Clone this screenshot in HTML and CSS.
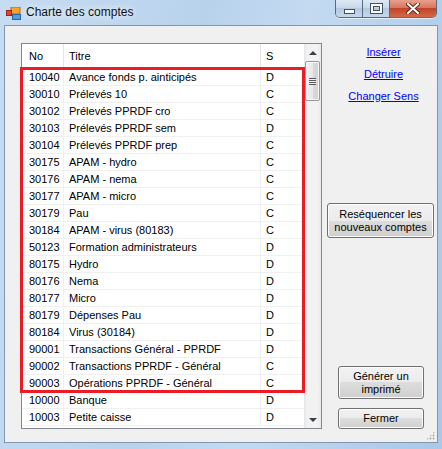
FILE: index.html
```html
<!DOCTYPE html>
<html>
<head>
<meta charset="utf-8">
<link rel="stylesheet" href="styles.css">
</head>
<body>
<div class="window">
  <div class="titlebar">
    <svg class="appicon" width="15" height="13" viewBox="0 0 15 13">
      <rect x="5" y="0" width="9" height="7" fill="#f4a52c" stroke="#b8680e" stroke-width="1"/>
      <rect x="0.5" y="3.5" width="5" height="5" fill="#e2452a" stroke="#9c2412" stroke-width="1"/>
      <rect x="6.5" y="7.5" width="8" height="5" fill="#4f9be6" stroke="#2a62a8" stroke-width="1"/>
    </svg>
    <span class="title">Charte des comptes</span>
    <div class="caption">
      <div class="cb cb-min"><span class="g-min"></span></div>
      <div class="cb cb-max"><span class="g-max"></span></div>
      <div class="cb cb-close">
        <svg width="14" height="11" viewBox="0 0 14 11"><path d="M2 1 L12 10 M12 1 L2 10" stroke="#5a2b22" stroke-width="4" stroke-linecap="square"/><path d="M2 1 L12 10 M12 1 L2 10" stroke="#ffffff" stroke-width="2" stroke-linecap="square"/></svg>
      </div>
    </div>
  </div>
  <div class="client">
    <div class="grid">
      <div class="table">
        <div class="row header"><div class="c no">No</div><div class="c ti">Titre</div><div class="c s">S</div></div>
        <div class="row"><div class="c no">10040</div><div class="c ti">Avance fonds p. ainticipés</div><div class="c s">D</div></div>
        <div class="row"><div class="c no">30010</div><div class="c ti">Prélevés 10</div><div class="c s">C</div></div>
        <div class="row"><div class="c no">30102</div><div class="c ti">Prélevés PPRDF cro</div><div class="c s">C</div></div>
        <div class="row"><div class="c no">30103</div><div class="c ti">Prélevés PPRDF sem</div><div class="c s">D</div></div>
        <div class="row"><div class="c no">30104</div><div class="c ti">Prélevés PPRDF prep</div><div class="c s">C</div></div>
        <div class="row"><div class="c no">30175</div><div class="c ti">APAM - hydro</div><div class="c s">C</div></div>
        <div class="row"><div class="c no">30176</div><div class="c ti">APAM - nema</div><div class="c s">C</div></div>
        <div class="row"><div class="c no">30177</div><div class="c ti">APAM - micro</div><div class="c s">C</div></div>
        <div class="row"><div class="c no">30179</div><div class="c ti">Pau</div><div class="c s">C</div></div>
        <div class="row"><div class="c no">30184</div><div class="c ti">APAM - virus (80183)</div><div class="c s">C</div></div>
        <div class="row"><div class="c no">50123</div><div class="c ti">Formation administrateurs</div><div class="c s">D</div></div>
        <div class="row"><div class="c no">80175</div><div class="c ti">Hydro</div><div class="c s">D</div></div>
        <div class="row"><div class="c no">80176</div><div class="c ti">Nema</div><div class="c s">D</div></div>
        <div class="row"><div class="c no">80177</div><div class="c ti">Micro</div><div class="c s">D</div></div>
        <div class="row"><div class="c no">80179</div><div class="c ti">Dépenses Pau</div><div class="c s">D</div></div>
        <div class="row"><div class="c no">80184</div><div class="c ti">Virus (30184)</div><div class="c s">D</div></div>
        <div class="row"><div class="c no">90001</div><div class="c ti">Transactions Général - PPRDF</div><div class="c s">D</div></div>
        <div class="row"><div class="c no">90002</div><div class="c ti">Transactions PPRDF - Général</div><div class="c s">C</div></div>
        <div class="row"><div class="c no">90003</div><div class="c ti">Opérations PPRDF - Général</div><div class="c s">C</div></div>
        <div class="row"><div class="c no">10000</div><div class="c ti">Banque</div><div class="c s">D</div></div>
        <div class="row"><div class="c no">10003</div><div class="c ti">Petite caisse</div><div class="c s">D</div></div>
      </div>
      <div class="scrollbar">
        <div class="sb-btn"><span class="tri-up"></span></div>
        <div class="thumb"><span class="grip-lines"></span></div>
        <div class="sb-track"></div>
        <div class="sb-btn"><span class="tri-down"></span></div>
      </div>
      <div class="highlight"></div>
    </div>
    <div class="side">
      <div class="links">
        <a class="link">Insérer</a>
        <a class="link">Détruire</a>
        <a class="link">Changer Sens</a>
      </div>
      <button class="btn btn-reseq">Reséquencer les<br>nouveaux comptes</button>
      <button class="btn btn-gen">Générer un<br>imprimé</button>
      <button class="btn btn-close">Fermer</button>
    </div>
    <div class="sizegrip"></div>
  </div>
</div>
</body>
</html>
```

FILE: styles.css
```css
html, body {
  margin: 0;
  padding: 0;
}
body {
  width: 442px;
  height: 449px;
  overflow: hidden;
  font-family: "Liberation Sans", Arial, sans-serif;
}
.window {
  width: 442px;
  height: 449px;
  background: linear-gradient(100deg, #c6dcf2 0%, #b9d2ec 40%, #c3daf1 60%, #aac8e8 100%);
  display: flex;
  flex-direction: column;
}
.titlebar {
  height: 25px;
  display: flex;
  align-items: flex-start;
  flex-shrink: 0;
}
.appicon {
  margin: 7px 0 0 6px;
  flex-shrink: 0;
}
.title {
  margin: 5px 0 0 5px;
  font-size: 12px;
  line-height: 15px;
  color: #111;
  text-shadow: 0 0 6px #e8f2fc, 0 0 8px #eef6fd;
}
.caption {
  margin-left: auto;
  margin-right: 5px;
  display: flex;
  height: 17px;
  border: 1px solid #566a84;
  border-top: none;
  border-radius: 0 0 5px 5px;
  overflow: hidden;
  box-shadow: 0 1px 0 rgba(255,255,255,0.6);
}
.cb {
  height: 17px;
  display: flex;
  align-items: center;
  justify-content: center;
  box-sizing: border-box;
}
.cb-min, .cb-max {
  width: 27px;
  background: linear-gradient(#dde8f4 0%, #c9d9ea 45%, #b4c8df 50%, #c6d8ec 100%);
  border-right: 1px solid #566a84;
}
.cb-close {
  width: 46px;
  background: linear-gradient(#e9a08c 0%, #d7775f 45%, #c2442a 50%, #d26a4a 100%);
}
.g-min {
  width: 9px;
  height: 3px;
  background: #fff;
  border: 1px solid #40516a;
  margin-top: 5px;
}
.g-max {
  width: 7px;
  height: 5px;
  border: 2px solid #fff;
  outline: 1px solid #40516a;
  box-shadow: inset 0 0 0 1px #40516a;
}
.client {
  margin: 0 4px;
  width: 434px;
  height: 418px;
  box-sizing: border-box;
  border: 1px solid #8197b0;
  background: #f0f0f0;
  display: flex;
  padding: 17px 0 0 16px;
  position: relative;
}
.grid {
  width: 301px;
  height: 386px;
  box-sizing: border-box;
  border: 1px solid #828790;
  background: #fff;
  display: flex;
  position: relative;
  flex-shrink: 0;
}
.table {
  width: 282px;
  overflow: hidden;
  font-size: 11px;
  color: #000;
}
.row {
  display: flex;
  height: 17px;
  box-sizing: border-box;
  border-bottom: 1px solid #f0f0f0;
  line-height: 16px;
}
.row.header {
  height: 25px;
  line-height: 24px;
  border-bottom: 1px solid #f0f0f0;
}
.c {
  box-sizing: border-box;
  white-space: nowrap;
  overflow: hidden;
}
.c.no {
  width: 42px;
  padding-left: 7px;
  border-right: 1px solid #f0f0f0;
}
.c.ti {
  width: 197px;
  padding-left: 5px;
  border-right: 1px solid #f0f0f0;
}
.c.s {
  width: 43px;
  padding-left: 5px;
}
.header .c.no, .header .c.ti {
  border-right-color: #e5e5e5;
}
.scrollbar {
  width: 17px;
  display: flex;
  flex-direction: column;
  background: linear-gradient(90deg, #e6e6e6 0%, #f2f2f2 20%, #f2f2f2 80%, #e9e9e9 100%);
}
.sb-btn {
  height: 17px;
  display: flex;
  align-items: center;
  justify-content: center;
  flex-shrink: 0;
}
.tri-up {
  width: 0;
  height: 0;
  border-left: 4px solid transparent;
  border-right: 4px solid transparent;
  border-bottom: 4px solid #3c3c4c;
}
.tri-down {
  width: 0;
  height: 0;
  border-left: 4px solid transparent;
  border-right: 4px solid transparent;
  border-top: 4px solid #3c3c4c;
}
.thumb {
  margin: 0 1px 0 1px;
  height: 40px;
  box-sizing: border-box;
  border: 1px solid #979797;
  border-radius: 2px;
  background: linear-gradient(90deg, #f1f1f1 0%, #e8e8e8 50%, #dadada 51%, #d2d2d2 100%);
  box-shadow: inset 0 0 0 1px #f8f8f8;
  display: flex;
  align-items: center;
  justify-content: center;
  flex-shrink: 0;
}
.grip-lines {
  width: 7px;
  height: 7px;
  background: repeating-linear-gradient(#5a5a5a 0px, #5a5a5a 1px, #eeeeee 1px, #eeeeee 2px);
}
.sb-track {
  flex: 1;
}
.highlight {
  position: absolute;
  left: -2px;
  top: 23px;
  width: 285px;
  height: 326px;
  box-sizing: border-box;
  border: 3px solid #ec1c24;
  pointer-events: none;
}
.side {
  width: 115px;
  display: flex;
  flex-direction: column;
  align-items: flex-start;
}
.links {
  width: 115px;
  box-sizing: border-box;
  padding-left: 8px;
  margin-top: 2px;
  display: flex;
  flex-direction: column;
  align-items: center;
  gap: 8px;
}
.link {
  font-size: 11px;
  line-height: 14px;
  color: #0000ff;
  text-decoration: underline;
}
.btn {
  font-family: "Liberation Sans", Arial, sans-serif;
  font-size: 11px;
  line-height: 13px;
  color: #000;
  padding: 0;
  box-sizing: border-box;
  border: 1px solid #707070;
  border-radius: 3px;
  background: linear-gradient(#f2f2f2 0%, #ebebeb 50%, #dddddd 50%, #cfcfcf 100%);
  box-shadow: inset 0 0 0 1px #fcfcfc;
  text-align: center;
}
.btn-reseq {
  margin: 100px 0 0 5px;
  width: 107px;
  height: 35px;
}
.btn-gen {
  margin: 128px 0 0 16px;
  width: 86px;
  height: 33px;
}
.btn-close {
  margin: 9px 0 0 16px;
  width: 86px;
  height: 21px;
}
.sizegrip {
  position: absolute;
  right: 2px;
  bottom: 2px;
  width: 9px;
  height: 9px;
  background:
    radial-gradient(circle, #a8b0b8 0.8px, transparent 1.2px) 0 0 / 3px 3px;
  clip-path: polygon(100% 0, 100% 100%, 0 100%);
}
```
